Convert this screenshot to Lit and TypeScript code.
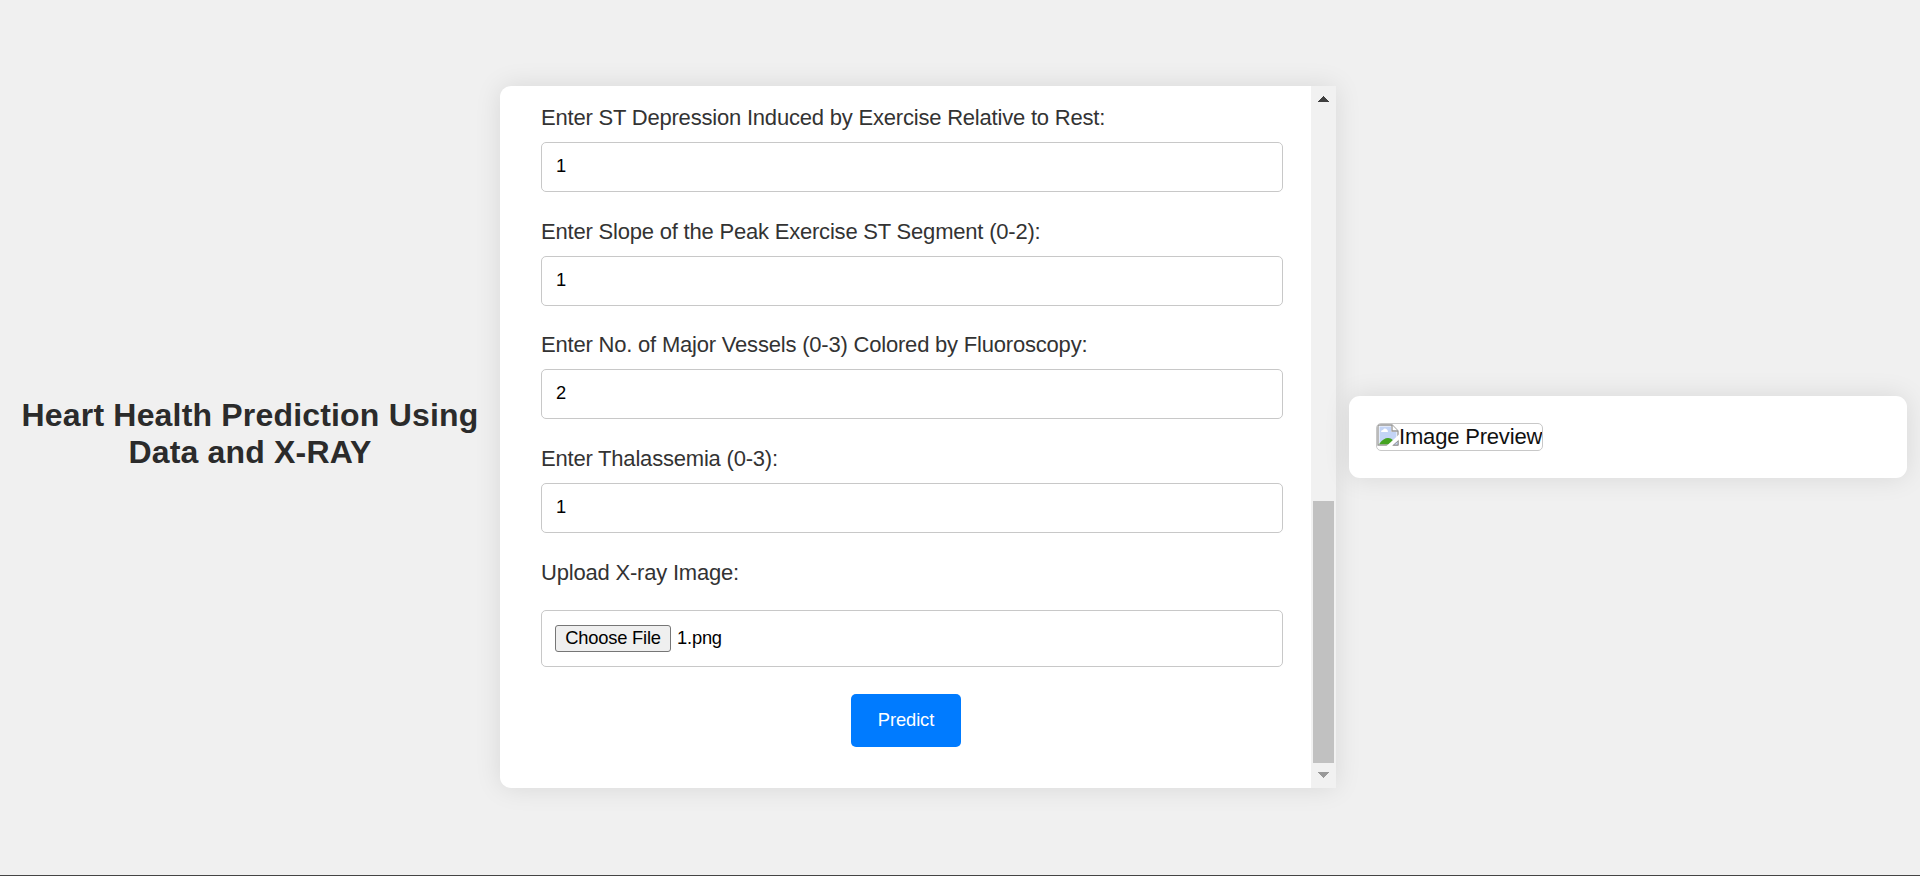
import { LitElement, html, css, svg } from "lit";
import { customElement } from "lit/decorators.js";

const FIELDS = [
  { label: "Enter ST Depression Induced by Exercise Relative to Rest:", value: "1" },
  { label: "Enter Slope of the Peak Exercise ST Segment (0-2):", value: "1" },
  { label: "Enter No. of Major Vessels (0-3) Colored by Fluoroscopy:", value: "2" },
  { label: "Enter Thalassemia (0-3):", value: "1" },
];

const brokenImage = svg`
  <svg class="broken" viewBox="0 0 22 22" width="22" height="22">
    <path d="M1 1H15L21 7V21H1Z" fill="#fff" stroke="#969696" stroke-width="1.3"/>
    <path d="M2.5 2.5H14V8H19.5V19.5H2.5Z" fill="#c3d4f6"/>
    <path d="M4 8Q4 6 6 6Q7 4 9 4.8Q11 5.5 11 8Z" fill="#fff"/>
    <path d="M2.5 20.3V19.5Q6.5 14 11 14Q14.5 14 16.5 17L12 20.3Z" fill="#45a321"/>
    <path d="M15 1V7H21" fill="#fff" stroke="#969696" stroke-width="1.3"/>
    <path d="M9.5 22L22 10.5V15.5L15 22Z" fill="#fff"/>
    <path d="M16.5 21H21V17Z" fill="#c3d4f6" stroke="#969696"/>
  </svg>`;

@customElement("app-root")
export class AppRoot extends LitElement {
  static styles = css`
    :host {
      display: flex;
      align-items: center;
      box-sizing: border-box;
      width: 100%;
      height: 876px;
      padding-bottom: 1px;
      border-bottom: 1px solid #444;
      background: #f0f0f0;
      font-family: "Liberation Sans", Arial, sans-serif;
      color: #333;
      overflow: hidden;
    }
    .title {
      width: 500px;
      margin: 0 0 7px;
      text-align: center;
      font-size: 32px;
      line-height: 37px;
      letter-spacing: 0.18px;
      color: #2b2b2b;
    }
    .card {
      background: #fff;
      border-radius: 11px;
      box-shadow: 0 0 27px rgba(0, 0, 0, 0.1);
    }
    .form-card {
      display: flex;
      width: 836px;
      height: 702px;
      overflow: hidden;
      border-radius: 11px 0 0 11px;
    }
    .form {
      flex: 1;
      display: flex;
      flex-direction: column;
      padding: 19px 28px 0 41px;
    }
    .field {
      height: 113.67px;
    }
    .label {
      display: block;
      font-size: 22px;
      line-height: 25px;
      letter-spacing: -0.2px;
      white-space: nowrap;
    }
    .input {
      display: flex;
      align-items: center;
      box-sizing: border-box;
      height: 50px;
      margin-top: 12px;
      padding: 0 14px 2px;
      border: 1px solid #c8c8c8;
      border-radius: 5px;
      font-size: 18.33px;
      color: #000;
    }
    .file {
      height: 57px;
      margin-top: 25px;
      padding: 0 13px;
      gap: 6px;
      letter-spacing: -0.2px;
    }
    .choose {
      box-sizing: border-box;
      width: 116px;
      height: 27px;
      padding: 0 0 1px;
      border: 1px solid #767676;
      border-radius: 3px;
      background: #efefef;
      font: inherit;
      letter-spacing: inherit;
      line-height: 23px;
      color: #000;
      white-space: nowrap;
    }
    .predict {
      align-self: center;
      width: 110px;
      height: 53px;
      margin: 27px 12px 0 0;
      padding: 0;
      border: 0;
      border-radius: 5px;
      background: #007bff;
      color: #fff;
      font: 18.33px "Liberation Sans", Arial, sans-serif;
      letter-spacing: -0.1px;
    }
    .scrollbar {
      display: flex;
      flex-direction: column;
      align-items: center;
      width: 25px;
      background: #f1f1f1;
    }
    .arrow {
      width: 11px;
      height: 6px;
      fill: #404040;
      shape-rendering: crispEdges;
    }
    .up {
      margin-top: 10px;
    }
    .down {
      margin-top: 9px;
      fill: #999;
    }
    .thumb {
      width: 21px;
      height: 262px;
      margin-top: 399px;
      background: #c1c1c1;
    }
    .preview-card {
      box-sizing: border-box;
      width: 558px;
      height: 82px;
      margin-left: 13px;
      padding: 27px;
    }
    .preview {
      display: inline-flex;
      box-sizing: border-box;
      height: 28px;
      border: 1px solid #c8c8c8;
      border-radius: 5px;
      font-size: 22px;
      line-height: 26px;
      letter-spacing: -0.18px;
      color: #111;
      white-space: nowrap;
      overflow: hidden;
    }
    .broken {
      flex: none;
    }
  `;

  render() {
    return html`
      <h1 class="title">Heart Health Prediction Using<br />Data and X-RAY</h1>
      <div class="card form-card">
        <div class="form">
          ${FIELDS.map(
            (f) => html`<div class="field">
              <span class="label">${f.label}</span>
              <div class="input">${f.value}</div>
            </div>`
          )}
          <span class="label">Upload X-ray Image:</span>
          <div class="input file"><button class="choose">Choose File</button><span>1.png</span></div>
          <button class="predict">Predict</button>
        </div>
        <div class="scrollbar">
          <svg class="arrow up" viewBox="0 0 11 6"><path d="M-0.5 6L5.5 0L11.5 6Z" /></svg>
          <div class="thumb"></div>
          <svg class="arrow down" viewBox="0 0 11 6"><path d="M-0.5 0H11.5L5.5 6Z" /></svg>
        </div>
      </div>
      <div class="card preview-card">
        <div class="preview">${brokenImage}<span>Image Preview</span></div>
      </div>
    `;
  }
}
